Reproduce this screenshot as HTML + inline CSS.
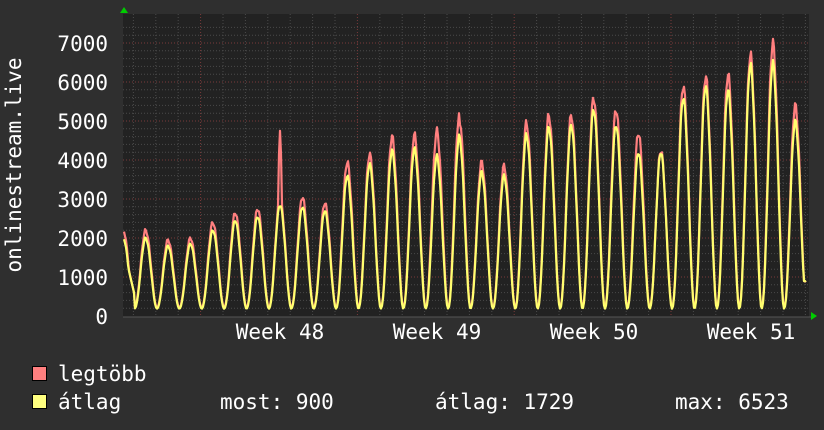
<!DOCTYPE html>
<html><head><meta charset="utf-8"><style>
html,body{margin:0;padding:0;background:#2f2f2f;width:824px;height:430px;overflow:hidden}
svg{display:block}
text{font-family:"DejaVu Sans Mono","Liberation Mono",monospace;fill:#fff;font-size:21px}
</style></head><body>
<svg id="g" width="824" height="430" xmlns="http://www.w3.org/2000/svg">
<rect x="0" y="0" width="824" height="430" fill="#2f2f2f"/>
<rect x="123" y="14" width="686" height="303" fill="#222"/>
<g id="grid"></g>
<path id="red" fill="none" stroke="#ff7f7f" stroke-width="2.2" stroke-linejoin="round"/>
<path id="yel" fill="none" stroke="#ffff6f" stroke-width="2.2" stroke-linejoin="round"/>
<line x1="123" y1="317" x2="812" y2="317" stroke="#555" stroke-width="1"/>
<polygon points="120,13 128,13 124,7" fill="#00cc00"/>
<polygon points="811,312 811,320 817,316" fill="#00cc00"/>
<g text-anchor="end">
<text x="108" y="51">7000</text><text x="108" y="90">6000</text><text x="108" y="129">5000</text>
<text x="108" y="168">4000</text><text x="108" y="207">3000</text><text x="108" y="246">2000</text>
<text x="108" y="285">1000</text><text x="108" y="324">0</text>
</g>
<text transform="translate(21,165) rotate(-90)" text-anchor="middle">onlinestream.live</text>
<g text-anchor="middle">
<text x="280" y="339">Week 48</text><text x="437" y="339">Week 49</text>
<text x="594" y="339">Week 50</text><text x="751" y="339">Week 51</text>
</g>
<rect x="32.5" y="366.5" width="14" height="14" fill="#ff7f7f" stroke="#000"/>
<rect x="32.5" y="394.5" width="14" height="14" fill="#ffff7f" stroke="#000"/>
<text x="58" y="381">legtöbb</text>
<text x="58" y="409">átlag</text>
<text x="220" y="409">most: 900</text>
<text x="435" y="409">átlag: 1729</text>
<text x="675" y="409">max: 6523</text>
</svg>
<script>
var g=document.getElementById('grid'),h='';
for(var v=200;v<=7400;v+=200){var y=316-v*0.039;if(y<14)break;var maj=v%1000==0;
h+='<line x1="123" x2="809" y1="'+y.toFixed(1)+'" y2="'+y.toFixed(1)+'" stroke="'+(maj?'#7a3a3a':'#4a4a4a')+'" stroke-dasharray="1,2"/>';}
for(var x=133.4;x<809;x+=22.4){var m=((x-200.6)%156.8+156.8)%156.8;var maj=m<2||m>154.8;
h+='<line y1="14" y2="317" x1="'+x.toFixed(1)+'" x2="'+x.toFixed(1)+'" stroke="'+(maj?'#7a3a3a':'#4a4a4a')+'" stroke-dasharray="1,2"/>';}
g.innerHTML=h;
var R=[2200,1950,2000,2400,2650,2750,3000,3050,2900,3950,4150,4600,4650,4750,5200,3950,3850,4950,5150,5150,5600,5300,4700,4250,5900,6150,6200,6700,7000,5400];
var Y=[2000,1800,1850,2200,2450,2550,2850,2800,2700,3600,3900,4250,4300,4100,4600,3700,3600,4650,4850,4900,5300,4900,4200,4200,5600,5900,5800,6450,6500,5000];
function val(arr,x,mn){var k=(x-145.6)/22.4,i=Math.round(k),t=k-i;
if(i<0)i=0;if(i>29)i=29;var pk=arr[i];var f;
if(t<0){var u=-t*2;f=u>1?0:Math.pow((1+Math.cos(Math.PI*u))/2,1.15);}
else{var u=t*2;f=u>1?0:Math.pow((1+Math.cos(Math.PI*u))/2,0.95);if(u<0.25)f=Math.max(f,1-u*0.6);}
return mn+(pk-mn)*f;}
function path(arr,mn,endv,noise,spike){var d='';for(var x=124;x<=806;x++){var v=val(arr,x,mn);
if(x>797)v=Math.max(endv,v);v+=noise*Math.sin(x*1.7)*v/3000;
if(x<135)v=Math.max(v,1700-(x-124)*110);
if(spike){if(Math.abs(x-280)<=1)v=4750-Math.abs(x-280)*600;if(Math.abs(x-459)<=1)v=5200-Math.abs(x-459)*300;}
var y=316-v*0.039;d+=(x==124?'M':'L')+x+','+y.toFixed(1);}
return d;}
document.getElementById('red').setAttribute('d',path(R,220,900,60,true));
document.getElementById('yel').setAttribute('d',path(Y,190,900,40,false));
</script>
</body></html>
